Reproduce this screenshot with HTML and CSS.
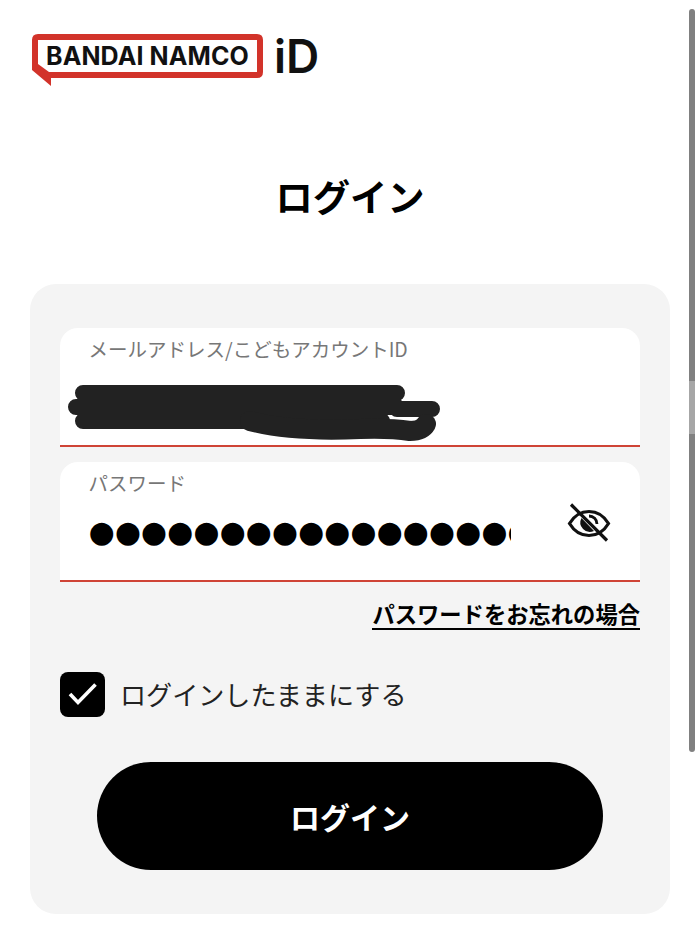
FILE: index.html
```html
<!DOCTYPE html>
<html lang="ja">
<head>
<meta charset="utf-8">
<title>ログイン</title>
<link rel="stylesheet" href="styles.css">
</head>
<body>
<header class="site-header">
  <div class="logo">
    <div class="bubble">
      <svg class="bubble-frame" width="232" height="54" viewBox="0 0 232 54" aria-hidden="true">
        <path fill-rule="evenodd" d="M7 1H226Q232 1 232 7V39Q232 45 226 45H20V53L1 37V7Q1 1 7 1ZM7 7V31L18 39H226V7Z" fill="#d2332a"/>
      </svg>
      <span class="brand">BANDAI NAMCO</span>
    </div>
    <span class="logo-id">iD</span>
  </div>
</header>
<main>
  <h1 class="title">ログイン</h1>
  <section class="card">
    <div class="field field-email">
      <label class="field-label">メールアドレス/こどもアカウントID</label>
      <svg class="scribble" width="384" height="66" viewBox="0 0 384 66" aria-hidden="true">
        <path d="M23 16H337M23 30H337M23 44H322M16 30H40M337 32H372" fill="none" stroke="#222" stroke-width="16" stroke-linecap="round"/>
        <path d="M190 44Q230 55 300 52Q330 51 350 54Q362 54 366 47" fill="none" stroke="#222" stroke-width="20" stroke-linecap="round" stroke-linejoin="round"/>
      </svg>
    </div>
    <div class="field field-password">
      <label class="field-label">パスワード</label>
      <div class="password-row">
        <div class="dots">●●●●●●●●●●●●●●●●●●●●</div>
        <svg class="eye" width="44" height="42" viewBox="0 0 44 42" aria-hidden="true">
          <path d="M2.500 21.500C7 14 14 9.500 22 9.500S37 14 41.500 21.500C37 29 30 33.500 22 33.500S7 29 2.500 21.500Z" fill="none" stroke="#111" stroke-width="3.200"/>
          <path d="M22 14A8 8 0 0 1 30 22" fill="none" stroke="#111" stroke-width="2.800"/>
          <path d="M14.500 16A9.500 9.500 0 0 0 27 29Z" fill="#111"/>
          <path d="M4 2.500L40 38.500" fill="none" stroke="#111" stroke-width="3.200"/>
        </svg>
      </div>
    </div>
    <div class="forgot-row"><a class="forgot" href="#">パスワードをお忘れの場合</a></div>
    <label class="remember">
      <span class="checkbox">
        <svg width="44" height="44" viewBox="0 0 44 44" aria-hidden="true"><path d="M9 21L17 29.500L34.500 11.500" fill="none" stroke="#fff" stroke-width="3.600"/></svg>
      </span>
      <span class="remember-text">ログインしたままにする</span>
    </label>
    <button class="submit" type="button">ログイン</button>
  </section>
</main>
<div class="scrollbar"></div>
</body>
</html>
```
FILE: styles.css
```css
* { box-sizing: border-box; }
html, body { margin: 0; height: 930px; overflow: hidden; }
body {
  background: #fff;
  color: #000;
  font-family: "Noto Sans CJK JP", "Noto Sans", sans-serif;
  position: relative;
}
.site-header { padding: 33px 0 0 31px; height: 90px; }
.logo { display: flex; align-items: flex-start; gap: 11px; }
.bubble { position: relative; width: 232px; height: 54px; flex: none; }
.bubble-frame { position: absolute; inset: 0; }
.brand {
  position: relative;
  display: block;
  padding: 8px 0 0 15px;
  font-family: "Inter", "Liberation Sans", sans-serif;
  font-weight: 700;
  font-size: 25px;
  line-height: 30px;
  letter-spacing: 0.1px;
  white-space: nowrap;
  color: #111;
}
.logo-id {
  font-family: "Inter", "Liberation Sans", sans-serif;
  font-weight: 600;
  font-size: 46px;
  line-height: 46px;
  color: #111;
}
.title {
  margin: 0;
  padding-top: 81px;
  height: 194px;
  text-align: center;
  font-size: 37.300px;
  line-height: 50px;
  font-weight: 700;
}
.card {
  margin: 0 30px;
  width: 640px;
  height: 630px;
  background: #f4f4f4;
  border-radius: 26px;
  padding: 44px 30px 0;
}
.field {
  background: #fff;
  border-radius: 18px 18px 0 0;
  border-bottom: 2px solid #cf4436;
  position: relative;
  padding: 7px 29px 0 28.500px;
}
.field-email { height: 119px; margin-bottom: 15px; }
.field-password { height: 120px; }
.field-label {
  display: block;
  font-size: 19.500px;
  line-height: 28px;
  color: #777;
}
.scribble { position: absolute; left: 0; top: 49px; }
.password-row { display: flex; justify-content: space-between; align-items: flex-start; }
.dots {
  width: 422px;
  overflow: hidden;
  white-space: nowrap;
  font-family: "DejaVu Sans", sans-serif;
  font-size: 30px;
  line-height: 46px;
  margin-top: 12px;
  color: #000;
}
.eye { margin: 5px 0 0 0; }
.forgot-row { display: flex; justify-content: flex-end; padding-top: 16px; }
.forgot {
  color: #000;
  font-size: 22.300px;
  line-height: 30px;
  font-weight: 700;
  text-decoration: none;
  border-bottom: 2px solid #000;
}
.remember { display: flex; align-items: center; gap: 15px; margin-top: 42px; }
.checkbox {
  width: 45px;
  height: 45px;
  background: #000;
  border-radius: 8px;
  display: flex;
  align-items: center;
  justify-content: center;
  flex: none;
}
.remember-text { font-size: 26.100px; line-height: 45px; color: #222; }
.submit {
  display: block;
  margin: 45px auto 0;
  width: 506px;
  height: 108px;
  border: 0;
  border-radius: 54px;
  background: #000;
  color: #fff;
  font-family: inherit;
  font-size: 30px;
  font-weight: 700;
}
.scrollbar {
  position: absolute;
  left: 689px;
  top: 9px;
  width: 6px;
  height: 743px;
  border-radius: 3px;
  background: linear-gradient(#808080 0 372px, #a6a6a6 372px 425px, #808080 425px);
}
```
